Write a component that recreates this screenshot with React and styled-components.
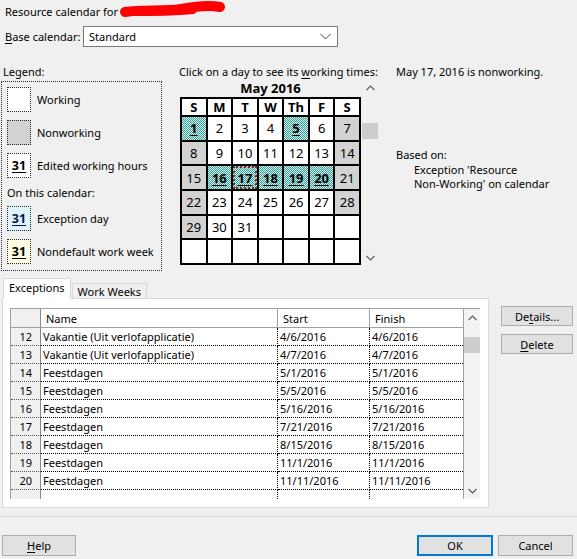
import React from 'react';
import styled, { createGlobalStyle, css } from 'styled-components';

const Global = createGlobalStyle`
  html, body { margin: 0; padding: 0; background: #f0f0f0; }
  body { font-family: "Noto Sans", "Open Sans", sans-serif; font-size: 11px; color: #000; }
  * { box-sizing: border-box; }
  u { text-decoration: underline; text-underline-offset: 2px; }
`;

const Dialog = styled.div`
  width: 577px;
  height: 559px;
  display: flex;
  flex-direction: column;
  overflow: hidden;
`;

const Title = styled.div`
  display: flex;
  align-items: center;
  margin: 4px 0 0 5px;
  height: 16px;
  line-height: 16px;
  white-space: nowrap;
`;

const Scribble = styled.svg`
  display: block;
  width: 108px;
  height: 20px;
  margin-left: -4px;
  margin-top: -6px;
  flex: none;
`;

const BaseRow = styled.div`
  display: flex;
  align-items: center;
  margin: 6px 0 0 5px;
  height: 21px;
`;

const BaseLabel = styled.span`
  width: 78px;
`;

const Combo = styled.div`
  width: 255px;
  height: 21px;
  background: #fff;
  border: 1px solid #7a7a7a;
  display: flex;
  align-items: center;
  justify-content: space-between;
  padding: 0 6px 0 5px;
`;

const TopSection = styled.div`
  display: flex;
  margin-top: 17px;
  height: 207px;
`;

const LegendCol = styled.div`
  margin-left: 1px;
  width: 161px;
  display: flex;
  flex-direction: column;
`;

const Line = styled.div`
  line-height: 16px;
  height: 16px;
  padding-left: ${p => p.$indent || 0}px;
  white-space: nowrap;
`;

const LegendBox = styled.div`
  margin-top: 1px;
  height: 190px;
  border: 1px dotted #2a2a2a;
  padding: 5px 0 0 5px;
`;

const LegendItem = styled.div`
  display: flex;
  align-items: center;
  gap: 6px;
  height: 25px;
  margin-bottom: 8px;
`;

const Swatch = styled.div`
  width: 24px;
  height: 25px;
  border: 1px dotted #2a2a2a;
  background: ${p => p.$bg};
  display: flex;
  align-items: center;
  justify-content: center;
  font-size: 12.5px;
  font-weight: 700;
  text-decoration: underline;
  text-underline-offset: 2px;
  color: ${p => p.$fg || '#000'};
`;

const SubHead = styled.div`
  line-height: 16px;
  margin: -1px 0 5px 0;
`;

const CalCol = styled.div`
  margin-left: 17px;
  display: flex;
  flex-direction: column;
`;

const CalBody = styled.div`
  display: flex;
`;

const CalMain = styled.div`
  margin-left: 1px;
  display: flex;
  flex-direction: column;
`;

const Month = styled.div`
  height: 16px;
  line-height: 16px;
  text-align: center;
  font-weight: 700;
  font-size: 13px;
`;

const CalGrid = styled.div`
  margin-top: 1px;
  width: 181px;
  height: 168px;
  background: #000;
  display: grid;
  grid-template-columns: repeat(7, 1fr);
  grid-template-rows: 16px repeat(6, 1fr);
  gap: 2px;
  padding: 2px;
`;

const WeekDay = styled.div`
  background: #fff;
  display: flex;
  align-items: center;
  justify-content: center;
  font-weight: 700;
  font-size: 13px;
`;

const DayCell = styled.div`
  display: flex;
  align-items: center;
  justify-content: center;
  font-size: 13px;
  background: ${p => (p.$kind === 'off' ? '#d2d2d2' : '#fff')};
  ${p => p.$kind === 'exception' && css`
    background: repeating-conic-gradient(#3a9f98 0 25%, #d4efec 0 50%) 0 0 / 2px 2px;
    font-weight: 700;
    text-decoration: underline;
    text-underline-offset: 2px;
  `}
  ${p => p.$selected && css`
    outline: 2px dotted #8a2020;
    outline-offset: -2px;
  `}
`;

const VScroll = styled.div`
  width: ${p => p.$w}px;
  margin-left: ${p => p.$ml || 0}px;
  height: ${p => p.$h}px;
  background: ${p => p.$bg || 'transparent'};
  display: flex;
  flex-direction: column;
  flex: none;
`;

const ScrollBtn = styled.div`
  height: ${p => p.$h || 16}px;
  display: flex;
  align-items: center;
  justify-content: center;
  flex: none;
`;

const Thumb = styled.div`
  height: 16px;
  margin-top: ${p => p.$mt}px;
  background: #cdcdcd;
  flex: none;
`;

const Spacer = styled.div`
  flex: 1;
`;

const InfoCol = styled.div`
  margin-left: 18px;
  display: flex;
  flex-direction: column;
`;

const BasedOn = styled.div`
  margin-top: 67px;
  line-height: 16px;
`;

const BasedText = styled.div`
  padding-left: 18px;
  line-height: 14px;
`;

const MainRow = styled.div`
  display: flex;
  margin-top: 7px;
`;

const TabArea = styled.div`
  margin-left: 2px;
  width: 487px;
  display: flex;
  flex-direction: column;
`;

const Tabs = styled.div`
  display: flex;
  align-items: flex-end;
  height: 21px;
  padding-left: 1px;
  margin-bottom: -1px;
  position: relative;
  z-index: 1;
`;

const Tab = styled.div`
  height: ${p => (p.$active ? 21 : 16)}px;
  padding: 0 5px;
  border: 1px solid #d9d9d9;
  border-bottom: ${p => (p.$active ? 'none' : '1px solid #d9d9d9')};
  background: ${p => (p.$active ? '#fff' : '#f0f0f0')};
  display: flex;
  align-items: center;
  padding-top: ${p => (p.$active ? 0 : 1)}px;
  padding-bottom: ${p => (p.$active ? 3 : 0)}px;
  margin-left: ${p => (p.$active ? 0 : 1)}px;
  white-space: nowrap;
`;

const Panel = styled.div`
  height: 210px;
  background: #fff;
  border: 1px solid #d9d9d9;
  padding: 9px 0 0 7px;
`;

const Table = styled.div`
  width: 470px;
  height: 191px;
  display: flex;
  border-top: 1px solid #a0a0a0;
  border-left: 1px solid #a0a0a0;
`;

const TableBody = styled.div`
  width: 453px;
  display: flex;
  flex-direction: column;
  border-right: 1px solid #a0a0a0;
`;

const Row = styled.div`
  display: grid;
  grid-template-columns: 30px 237px 92px 1fr;
  height: ${p => (p.$header ? 19 : 18)}px;
  flex: ${p => (p.$fill ? 1 : 'none')};
`;

const Cell = styled.div`
  display: flex;
  align-items: center;
  white-space: nowrap;
  overflow: hidden;
  padding-left: ${p => (p.$header ? 5 : 2)}px;
  border-bottom: ${p => (p.$header ? '1px solid #a0a0a0' : p.$fill ? 'none' : '1px dotted #000')};
  border-right: ${p => (p.$last ? 'none' : p.$header ? '1px solid #a0a0a0' : '1px dotted #000')};
`;

const NumCell = styled.div`
  display: flex;
  align-items: center;
  justify-content: flex-end;
  padding-right: 8px;
  background: #f0f0f0;
  border-right: 1px solid #8a8a8a;
  border-bottom: ${p => (p.$header ? '1px solid #a0a0a0' : p.$fill ? 'none' : '1px dotted #555')};
`;

const SideButtons = styled.div`
  margin: 28px 0 0 12px;
  display: flex;
  flex-direction: column;
  gap: 8px;
`;

const Button = styled.div`
  width: ${p => p.$w || 72}px;
  height: ${p => p.$h || 21}px;
  background: #e1e1e1;
  border: ${p => (p.$default ? '2px solid #0078d7' : '1px solid #adadad')};
  display: flex;
  align-items: center;
  justify-content: center;
  white-space: nowrap;
`;

const Separator = styled.div`
  margin-top: 8px;
  height: 1px;
  background: #dadada;
`;

const BottomRow = styled.div`
  display: flex;
  align-items: center;
  margin-top: 18px;
  padding: 0 4px 0 2px;
  gap: 5px;
`;

const Chevron = ({ up, color = '#5a5a5a' }) => (
  <svg width="9" height="6" viewBox="0 0 9 6">
    <polyline
      points={up ? '0.5,5 4.5,1 8.5,5' : '0.5,1 4.5,5 8.5,1'}
      fill="none"
      stroke={color}
      strokeWidth="1.1"
    />
  </svg>
);

const weekDays = ['S', 'M', 'T', 'W', 'Th', 'F', 'S'];
const exceptionDays = new Set([1, 5, 16, 17, 18, 19, 20]);

const cells = [];
for (let r = 0; r < 6; r++) {
  for (let c = 0; c < 7; c++) {
    const d = r * 7 + c + 1;
    const day = d <= 31 ? d : null;
    let kind = 'work';
    if (day === null) kind = 'empty';
    else if (exceptionDays.has(day)) kind = 'exception';
    else if (c === 0 || c === 6) kind = 'off';
    cells.push({ key: `${r}-${c}`, day, kind });
  }
}

const rows = [
  [12, 'Vakantie (Uit verlofapplicatie)', '4/6/2016', '4/6/2016'],
  [13, 'Vakantie (Uit verlofapplicatie)', '4/7/2016', '4/7/2016'],
  [14, 'Feestdagen', '5/1/2016', '5/1/2016'],
  [15, 'Feestdagen', '5/5/2016', '5/5/2016'],
  [16, 'Feestdagen', '5/16/2016', '5/16/2016'],
  [17, 'Feestdagen', '7/21/2016', '7/21/2016'],
  [18, 'Feestdagen', '8/15/2016', '8/15/2016'],
  [19, 'Feestdagen', '11/1/2016', '11/1/2016'],
  [20, 'Feestdagen', '11/11/2016', '11/11/2016'],
];

export default function App() {
  return (
    <>
      <Global />
      <Dialog>
        <Title>
          Resource calendar for '
          <Scribble viewBox="0 0 108 20">
            <path d="M6 13 C 24 10, 44 13, 62 10 C 78 7, 92 6, 101 8" fill="none" stroke="#f00" strokeWidth="10" strokeLinecap="round" />
            <path d="M8 14 C 30 14, 52 14, 74 12" fill="none" stroke="#f00" strokeWidth="6" strokeLinecap="round" />
          </Scribble>
        </Title>

        <BaseRow>
          <BaseLabel><u>B</u>ase calendar:</BaseLabel>
          <Combo>
            <span>Standard</span>
            <svg width="11" height="7" viewBox="0 0 11 7">
              <polyline points="0.5,1 5.5,6 10.5,1" fill="none" stroke="#444" strokeWidth="1" />
            </svg>
          </Combo>
        </BaseRow>

        <TopSection>
          <LegendCol>
            <Line $indent={2}>Legend:</Line>
            <LegendBox>
              <LegendItem>
                <Swatch $bg="#fff" />
                <span>Working</span>
              </LegendItem>
              <LegendItem>
                <Swatch $bg="#d2d2d2" />
                <span>Nonworking</span>
              </LegendItem>
              <LegendItem>
                <Swatch $bg="#fff">31</Swatch>
                <span>Edited working hours</span>
              </LegendItem>
              <SubHead>On this calendar:</SubHead>
              <LegendItem>
                <Swatch $bg="#dff4f8" $fg="#0b1450">31</Swatch>
                <span>Exception day</span>
              </LegendItem>
              <LegendItem>
                <Swatch $bg="#fffde3">31</Swatch>
                <span>Nondefault work week</span>
              </LegendItem>
            </LegendBox>
          </LegendCol>

          <CalCol>
            <Line>Click on a day to see its <u>w</u>orking times:</Line>
            <CalBody>
              <CalMain>
                <Month>May 2016</Month>
                <CalGrid>
                  {weekDays.map((w, i) => (
                    <WeekDay key={i}>{w}</WeekDay>
                  ))}
                  {cells.map(c => (
                    <DayCell key={c.key} $kind={c.kind} $selected={c.day === 17}>
                      {c.day}
                    </DayCell>
                  ))}
                </CalGrid>
              </CalMain>
              <VScroll $w={16} $ml={1} $h={186}>
                <ScrollBtn><Chevron up /></ScrollBtn>
                <Thumb $mt={27} />
                <Spacer />
                <ScrollBtn><Chevron /></ScrollBtn>
              </VScroll>
            </CalBody>
          </CalCol>

          <InfoCol>
            <Line>May 17, 2016 is nonworking.</Line>
            <BasedOn>Based on:</BasedOn>
            <BasedText>Exception 'Resource</BasedText>
            <BasedText>Non-Working' on calendar</BasedText>
          </InfoCol>
        </TopSection>

        <MainRow>
          <TabArea>
            <Tabs>
              <Tab $active>Exceptions</Tab>
              <Tab>Work Weeks</Tab>
            </Tabs>
            <Panel>
              <Table>
                <TableBody>
                  <Row $header>
                    <NumCell $header />
                    <Cell $header>Name</Cell>
                    <Cell $header>Start</Cell>
                    <Cell $header $last>Finish</Cell>
                  </Row>
                  {rows.map(r => (
                    <Row key={r[0]}>
                      <NumCell>{r[0]}</NumCell>
                      <Cell>{r[1]}</Cell>
                      <Cell>{r[2]}</Cell>
                      <Cell $last>{r[3]}</Cell>
                    </Row>
                  ))}
                  <Row $fill>
                    <NumCell $fill />
                    <Cell $fill />
                    <Cell $fill />
                    <Cell $fill $last />
                  </Row>
                </TableBody>
                <VScroll $w={16} $h={190} $bg="#f3f3f3">
                  <ScrollBtn $h={17}><Chevron up /></ScrollBtn>
                  <Thumb $mt={11} />
                  <Spacer />
                  <ScrollBtn $h={17}><Chevron /></ScrollBtn>
                </VScroll>
              </Table>
            </Panel>
          </TabArea>
          <SideButtons>
            <Button $h={20}>De<u>t</u>ails...</Button>
            <Button $h={20}><u>D</u>elete</Button>
          </SideButtons>
        </MainRow>

        <Separator />

        <BottomRow>
          <Button $w={74}><u>H</u>elp</Button>
          <Spacer />
          <Button $w={76} $default>OK</Button>
          <Button $w={75}>Cancel</Button>
        </BottomRow>
      </Dialog>
    </>
  );
}
